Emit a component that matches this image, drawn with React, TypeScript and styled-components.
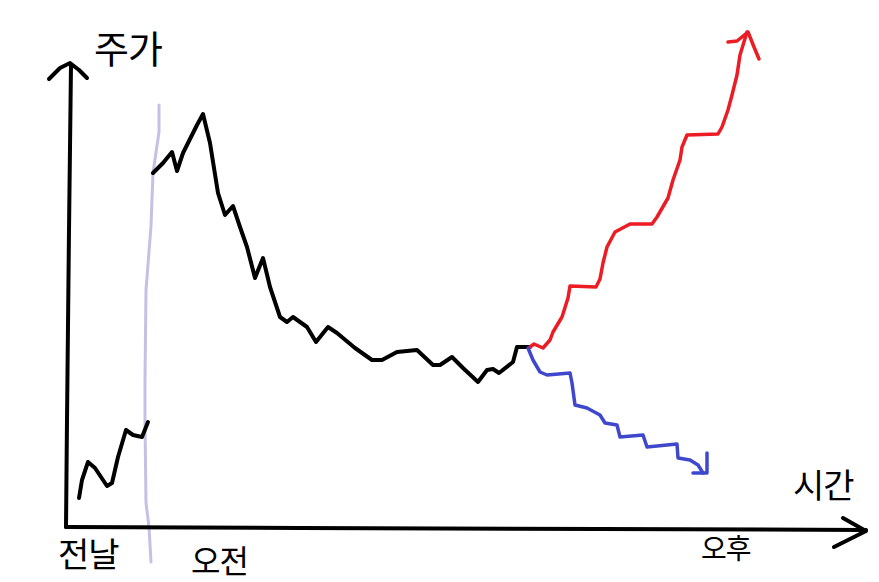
import React, { FC } from "react";
import styled, { createGlobalStyle } from "styled-components";

const GlobalStyle = createGlobalStyle`
  html, body {
    margin: 0;
    padding: 0;
    background: #ffffff;
  }
`;

const Canvas = styled.div`
  position: relative;
  width: 879px;
  height: 582px;
  background: #ffffff;
  overflow: hidden;
`;

const Drawing = styled.svg`
  display: block;
  width: 879px;
  height: 582px;
`;

interface LabelProps {
  $x: number;
  $y: number;
  $size?: number;
}

const Label = styled.div<LabelProps>`
  position: absolute;
  left: ${(p) => p.$x}px;
  top: ${(p) => p.$y}px;
  font-family: "Noto Sans CJK KR", "Noto Sans", sans-serif;
  font-size: ${(p) => p.$size || 34}px;
  font-weight: 400;
  line-height: 1;
  color: #000000;
  letter-spacing: -1px;
  white-space: nowrap;
`;

type Pt = [number, number];

const toPath = (pts: Pt[]) =>
  pts.map((p, i) => `${i === 0 ? "M" : "L"}${p[0]} ${p[1]}`).join(" ");

const prevDay: Pt[] = [
  [79, 498], [82, 480], [88, 462], [95, 468], [107, 486], [112, 483],
  [118, 457], [126, 430], [133, 435], [142, 437], [148, 422],
];

const morning: Pt[] = [
  [153, 173], [163, 163], [172, 152], [177, 171], [183, 153], [192, 135],
  [197, 125], [203, 114], [210, 143], [218, 193], [225, 215], [233, 206],
  [240, 227], [247, 247], [255, 278], [263, 258], [270, 287], [280, 317],
  [287, 322], [293, 317], [307, 327], [310, 332], [316, 342], [328, 327],
  [337, 333], [355, 348], [372, 360], [382, 360], [397, 352], [417, 350],
  [433, 365], [440, 365], [452, 357], [463, 368], [478, 382], [487, 370],
  [493, 369], [499, 373], [513, 362], [517, 347], [530, 347],
];

const up: Pt[] = [
  [530, 347], [534, 344], [543, 348], [550, 340], [553, 332], [562, 317],
  [568, 298], [570, 286], [596, 287], [600, 279], [603, 263], [607, 247],
  [615, 232], [630, 224], [652, 224], [657, 217], [668, 198], [673, 180],
  [680, 160], [682, 147], [687, 135], [718, 134], [722, 127], [728, 110],
  [732, 95], [737, 75], [740, 55], [747, 32],
];

const upHead: Pt[] = [[728, 42], [737, 41], [748, 32], [754, 47], [759, 59]];

const down: Pt[] = [
  [528, 348], [533, 360], [540, 372], [547, 375], [570, 373], [572, 383],
  [575, 405], [587, 408], [600, 415], [605, 423], [617, 425], [620, 437],
  [643, 435], [647, 447], [677, 444], [678, 458], [690, 460], [698, 465],
  [703, 473],
];

const downHead: Pt[] = [[693, 473], [707, 473], [707, 453]];

const divider: Pt[] = [
  [159, 105], [159, 132], [153, 173], [151, 226], [146, 290], [145, 380],
  [145, 423], [146, 503], [149, 527], [151, 562],
];

const App: FC = () => {
  return (
    <>
      <GlobalStyle />
      <Canvas>
        <Drawing viewBox="0 0 879 582">
          <g fill="none" strokeLinecap="round" strokeLinejoin="round">
            <path d={toPath(divider)} stroke="#c4c0e6" strokeWidth={3} />
            <path d="M66 527 L67 420 L69 230 L71 65" stroke="#000" strokeWidth={4} />
            <path d="M49 79 L60 68 L70 63 L79 70 L87 78" stroke="#000" strokeWidth={4} />
            <path d="M66 527 L300 528 L600 529 L866 530" stroke="#000" strokeWidth={4} />
            <path d="M843 518 L866 531 L834 547" stroke="#000" strokeWidth={4} />
            <path d={toPath(prevDay)} stroke="#000" strokeWidth={4} />
            <path d={toPath(morning)} stroke="#000" strokeWidth={4} />
            <path d={toPath(up)} stroke="#ec1c24" strokeWidth={3.5} />
            <path d={toPath(upHead)} stroke="#ec1c24" strokeWidth={3.5} />
            <path d={toPath(down)} stroke="#3f48cc" strokeWidth={3.5} />
            <path d={toPath(downHead)} stroke="#3f48cc" strokeWidth={3.5} />
          </g>
        </Drawing>
        <Label $x={94} $y={28} $size={38}>주가</Label>
        <Label $x={58} $y={536} $size={34}>전날</Label>
        <Label $x={191} $y={543} $size={32}>오전</Label>
        <Label $x={793} $y={467} $size={34}>시간</Label>
        <Label $x={701} $y={533} $size={28}>오후</Label>
      </Canvas>
    </>
  );
};

export default App;
